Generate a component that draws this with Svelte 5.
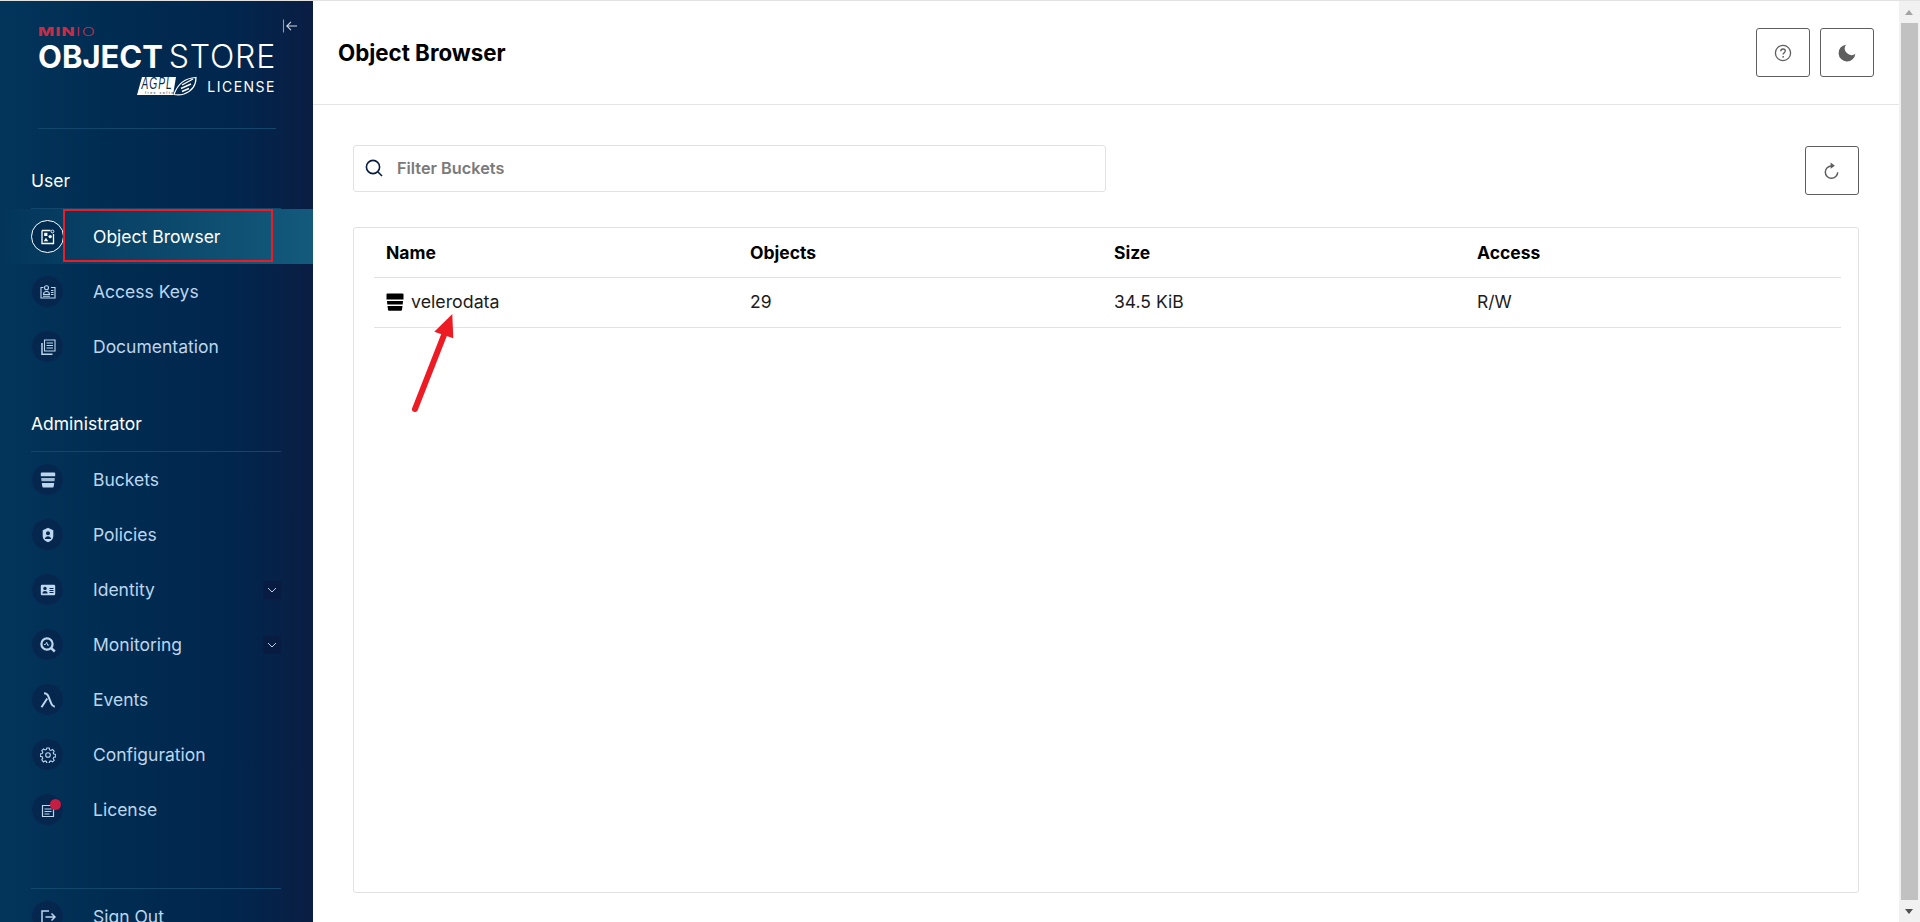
<script>
    const userItems = [
        { label: 'Object Browser', icon: 'browser', active: true },
        { label: 'Access Keys', icon: 'keys' },
        { label: 'Documentation', icon: 'docs' }
    ];
    const adminItems = [
        { label: 'Buckets', icon: 'bucket' },
        { label: 'Policies', icon: 'policy' },
        { label: 'Identity', icon: 'identity', more: true },
        { label: 'Monitoring', icon: 'monitor', more: true },
        { label: 'Events', icon: 'lambda' },
        { label: 'Configuration', icon: 'gear' },
        { label: 'License', icon: 'license', badge: true }
    ];
    const columns = ['Name', 'Objects', 'Size', 'Access'];
</script>

{#snippet navIcon(name)}
    <svg viewBox="0 0 16 16" width="16" height="16" fill="none" stroke="currentColor" stroke-width="1.1">
        {#if name === 'browser'}
            <path d="M2 1.500h8.500M13.500 5v9.500H2v-13" stroke-width="1.300" />
            <circle cx="12.500" cy="2.500" r="1.400" stroke-width="0.900" />
            <rect x="4.200" y="3.800" width="3.200" height="3.200" fill="currentColor" stroke="none" />
            <circle cx="10.200" cy="7.600" r="1.700" fill="currentColor" stroke="none" />
            <path d="M6 8.800l2.200 3.500H3.800z" fill="currentColor" stroke="none" />
        {:else if name === 'keys'}
            <path d="M3.500 3.500H1v10.500h14V3.500h-4" />
            <circle cx="6.500" cy="3.800" r="2" />
            <path d="M3.500 10.500c0-2 1.300-3 3-3s3 1 3 3z" />
            <path d="M11 6.500h2.500M11 8.500h2.500M11 10.500h2.500M3 12.300h7" />
        {:else if name === 'docs'}
            <path d="M4.500 1h10.500v11h-10.500z" />
            <path d="M6.500 4h6.500M6.500 6.500h6.500M6.500 9h6.500" />
            <path d="M2 4v11.200h10.500" stroke-width="1.500" />
        {:else if name === 'bucket'}
            <path d="M.8 1.500q0-1 1-1h12.400q1 0 1 1v2.700H.8z" fill="currentColor" stroke="none" />
            <path d="M1.200 6h13.600l-.3 3.300H1.500z" fill="currentColor" stroke="none" opacity=".85" />
            <path d="M1.800 11h12.400l-.5 3.500q-.1 1-1 1H3.300q-.9 0-1-1z" fill="currentColor" stroke="none" />
        {:else if name === 'policy'}
            <path d="M8 .8l5.300 2.400v6c0 3-2.300 5-5.300 6-3-1-5.300-3-5.300-6v-6z" fill="currentColor" stroke="none" />
            <circle cx="8" cy="6.300" r="2" fill="#06264e" stroke="none" />
            <path d="M4.800 12c.5-2 1.700-2.800 3.200-2.800s2.700.8 3.200 2.800z" fill="#06264e" stroke="none" />
        {:else if name === 'identity'}
            <rect x=".8" y="2.800" width="14.400" height="10.400" rx="1.200" fill="currentColor" stroke="none" />
            <circle cx="5" cy="6.400" r="1.700" fill="#06264e" stroke="none" />
            <path d="M2.400 11.500c.2-1.800 1.300-2.500 2.600-2.500s2.400.7 2.600 2.500z" fill="#06264e" stroke="none" />
            <path d="M9.500 6.500h4M9.500 8.500h4M9.500 10.500h4" stroke="#06264e" />
        {:else if name === 'monitor'}
            <circle cx="7" cy="7" r="5.600" stroke-width="2.200" />
            <path d="M4 7.500h1.500l1.200-2.200 1.300 3.400 1-1.200" stroke-width="1" />
            <path d="M11 11l3.800 3.500" stroke-width="2.400" />
        {:else if name === 'lambda'}
            <path d="M1.500 15.200L7.200 6.500M4 1.200c2.500 0 3.500.9 4.300 3l3 7.500c.6 1.500 1.500 2.700 3.500 3" stroke-width="2" />
        {:else if name === 'gear'}
            <circle cx="8" cy="8" r="2.300" />
            <path d="M6.800 1h2.400l.4 1.900 1.300.6 1.700-1 1.600 1.700-1 1.600.6 1.300 1.900.4v2.400l-1.900.4-.6 1.300 1 1.700-1.700 1.600-1.600-1-1.300.6-.4 1.900H6.800l-.4-1.900-1.300-.6-1.700 1L1.800 12.700l1-1.600-.6-1.300-1.900-.4V7l1.900-.4.6-1.300-1-1.700 1.700-1.600 1.600 1 1.300-.6z" />
        {:else if name === 'license'}
            <path d="M2.500 3.500h11v11h-11z" stroke-width="1.200" />
            <path d="M4.500 7h7M4.500 9.500h7M4.500 12h5" stroke-width="1.200" />
        {:else if name === 'signout'}
            <path d="M9 2H2v12h7" stroke-width="1.500" />
            <path d="M5.500 8h9.500M11.500 4.500L15 8l-3.500 3.500" stroke-width="1.500" />
        {/if}
    </svg>
{/snippet}

{#snippet navRow(item)}
    <a class="nav-row" class:active={item.active} href="#top">
        <span class="nav-icon">
            {@render navIcon(item.icon)}
            {#if item.badge}<span class="dot"></span>{/if}
        </span>
        <span class="nav-label">{item.label}</span>
        {#if item.more}
            <span class="chevron">
                <svg viewBox="0 0 10 10" width="10" height="10" fill="none" stroke="currentColor" stroke-width="1">
                    <path d="M1 3L5 7l4-4" />
                </svg>
            </span>
        {/if}
    </a>
{/snippet}

<div class="app">
    <aside class="sidebar">
        <button class="collapse" aria-label="Collapse menu">
            <svg viewBox="0 0 16 16" width="16" height="16" fill="none" stroke-width="1.100">
                <path d="M1.500 1.500v13" stroke="#8d9db3" />
                <path d="M15 8H5M9 3.800L4.800 8 9 12.200" stroke="#cfd8e3" />
            </svg>
        </button>

        <div class="logo">
            <div class="minio"><b>MIN</b>IO</div>
            <div class="product"><b>OBJECT</b><span>STORE</span></div>
            <div class="license-line">
                <svg class="agpl" viewBox="0 0 62 20" width="62" height="20">
                    <path d="M6 1h34l-3 18H1z" fill="#fff" />
                    <text x="5.500" y="13" class="agpl-text" textLength="31" lengthAdjust="spacingAndGlyphs">AGPL</text>
                    <text x="9" y="17.800" class="agpl-small">free software</text>
                    <path d="M38 18.500C42 7 50 2 60 1.500c0 5-2 13-12 16.500-4 1.300-7 1-10 .5z" fill="none" stroke="#fff" stroke-width="1.200" />
                    <path d="M46 9l11-6M45 12.500l10-4.500M46 15.500l7-3" stroke="#fff" stroke-width="1.400" fill="none" />
                </svg>
                <span>LICENSE</span>
            </div>
        </div>

        <div class="section-title first">User</div>
        {#each userItems as item}
            {@render navRow(item)}
        {/each}

        <div class="section-title">Administrator</div>
        {#each adminItems as item}
            {@render navRow(item)}
        {/each}

        <div class="sign-out">
            {@render navRow({ label: 'Sign Out', icon: 'signout' })}
        </div>
    </aside>

    <main class="content">
        <header class="topbar">
            <h1>Object Browser</h1>
            <div class="top-actions">
                <button class="icon-button" aria-label="Help">
                    <svg viewBox="0 0 18 18" width="18" height="18" fill="none" stroke="currentColor" stroke-width="1.300">
                        <circle cx="9" cy="9" r="7.600" />
                        <path d="M6.800 7.200c0-1.400 1-2.200 2.300-2.200s2.200.8 2.200 2c0 1.600-2.200 1.700-2.200 3.400" />
                        <circle cx="9.100" cy="12.800" r=".9" fill="currentColor" stroke="none" />
                    </svg>
                </button>
                <button class="icon-button" aria-label="Dark mode">
                    <svg viewBox="0 0 18 18" width="18" height="18" fill="currentColor">
                        <path d="M8 .65A8.400 8.400 0 1 0 17.350 9.700 6.600 6.600 0 0 1 8 .65z" />
                    </svg>
                </button>
            </div>
        </header>

        <div class="body">
            <div class="toolbar">
                <label class="search">
                    <svg viewBox="0 0 18 18" width="18" height="18" fill="none" stroke="#081c42" stroke-width="1.600">
                        <circle cx="8" cy="8" r="6.600" />
                        <path d="M13 13l4 4" />
                    </svg>
                    <input type="text" placeholder="Filter Buckets" />
                </label>
                <button class="icon-button refresh" aria-label="Refresh">
                    <svg viewBox="0 0 18 18" width="18" height="18" fill="none" stroke="currentColor" stroke-width="1.500">
                        <path d="M8.500 3.900a6.200 6.200 0 1 0 6.200 6.300" />
                        <path d="M7.600 .6l4.300 3.200-4.300 2.900z" fill="currentColor" stroke="none" />
                    </svg>
                </button>
            </div>

            <section class="table-card">
                <div class="table-row head">
                    {#each columns as col}
                        <div>{col}</div>
                    {/each}
                </div>
                <div class="table-row body-row">
                    <div class="name-cell">
                        <svg viewBox="0 0 18 18" width="18" height="18" fill="#000">
                            <path d="M.5 1.500q0-1 1-1h15q1 0 1 1v5H.5z" />
                            <path d="M1 8h16l-.3 3.500H1.300z" />
                            <path d="M1.500 13h15l-.5 3.800q-.1 1-1 1H3q-.9 0-1-1z" />
                        </svg>
                        <span class="bucket-name">velerodata</span>
                    </div>
                    <div>29</div>
                    <div>34.5 KiB</div>
                    <div>R/W</div>
                </div>
            </section>
        </div>
    </main>

    <div class="scrollbar">
        <div class="arrow up"></div>
        <div class="thumb"></div>
        <div class="arrow down"></div>
    </div>

    <!-- annotations drawn over the screenshot -->
    <div class="red-box"></div>
    <svg class="red-arrow" viewBox="0 0 60 110" width="60" height="110">
        <path d="M6 103L37 24" stroke="#ed1c24" stroke-width="6" stroke-linecap="round" fill="none" />
        <path d="M43.300 8L44.300 32.300 25.300 25.700z" fill="#ed1c24" />
    </svg>
</div>

<style>
    :global(body) {
        margin: 0;
        overflow: hidden;
        background: #fff;
    }

    .app {
        position: relative;
        display: flex;
        height: 921px;
        border-top: 1px solid #e2e2e2;
        overflow: hidden;
        font-family: 'Inter', sans-serif;
        font-size: 17.500px;
        color: #000;
    }

    .sidebar {
        position: relative;
        flex: 0 0 313px;
        height: 100%;
        overflow: hidden;
        background: linear-gradient(90deg, #03355a 0%, #012c52 35%, #01264e 75%, #0b1d42 100%);
        color: #fff;
    }

    .collapse {
        position: absolute;
        top: 17px;
        right: 15px;
        padding: 0;
        border: none;
        background: none;
        display: flex;
    }

    .logo {
        height: 128px;
        margin: 0 37px 0 38px;
        padding-top: 26px;
        box-sizing: border-box;
        border-bottom: 1px solid #12466b;
        color: #fff;
    }

    .minio {
        font-size: 11.500px;
        line-height: 10px;
        letter-spacing: 0.800px;
        font-weight: 300;
        color: #c72c48;
        transform: scaleX(1.500);
        transform-origin: left;
    }

    .minio b {
        font-weight: 800;
    }

    .product {
        display: flex;
        justify-content: space-between;
        margin-top: 4px;
        font-size: 31px;
        line-height: 32px;
        white-space: nowrap;
    }

    .product b {
        font-weight: 700;
    }

    .product span {
        font-weight: 300;
        font-size: 32px;
        letter-spacing: 0.800px;
    }

    .license-line {
        display: flex;
        justify-content: flex-end;
        align-items: center;
        gap: 9px;
        margin-top: 3px;
        font-size: 14px;
        letter-spacing: 1.500px;
    }

    .agpl-text {
        font-family: 'Liberation Sans', sans-serif;
        font-size: 16px;
        font-style: italic;
        fill: #0a2a50;
    }

    .agpl-small {
        font-family: 'Liberation Sans', sans-serif;
        font-size: 3.500px;
        fill: #0a2a50;
    }

    .section-title {
        height: 54px;
        margin: 24px 32px 0 31px;
        box-sizing: border-box;
        padding-bottom: 3px;
        border-bottom: 1px solid #12466b;
        display: flex;
        align-items: center;
        color: #fff;
    }

    .section-title.first {
        margin-top: 26px;
    }

    .nav-row {
        display: flex;
        align-items: center;
        height: 55px;
        padding: 0 32px 0 31px;
        color: #bcd6ee;
        text-decoration: none;
    }

    .nav-row.active {
        color: #fff;
        background: linear-gradient(90deg, #03355a 0%, #135a7c 100%);
    }

    .nav-icon {
        position: relative;
        flex: 0 0 33px;
        height: 33px;
        margin-right: 29px;
        box-sizing: border-box;
        border: 1px solid #06305a;
        border-radius: 50%;
        background: #05264d;
        display: flex;
        align-items: center;
        justify-content: center;
    }

    .active .nav-icon {
        border-color: #fff;
        background: #012c52;
    }

    .dot {
        position: absolute;
        top: 5px;
        left: 18px;
        width: 11px;
        height: 11px;
        border-radius: 50%;
        background: #c41e44;
    }

    .nav-label {
        flex: 1;
    }

    .chevron {
        width: 18px;
        height: 18px;
        border-radius: 2px;
        background: #081c42;
        color: #b8cfe5;
        display: flex;
        align-items: center;
        justify-content: center;
    }

    .sign-out {
        margin: 51px 0 0;
    }

    .sign-out::before {
        content: '';
        display: block;
        height: 1px;
        margin: 0 32px 0 31px;
        background: #12466b;
    }

    .content {
        flex: 1;
        min-width: 0;
        display: flex;
        flex-direction: column;
    }

    .topbar {
        height: 104px;
        flex: none;
        box-sizing: border-box;
        padding: 0 25px;
        border-bottom: 1px solid #e5e5e5;
        display: flex;
        align-items: center;
        justify-content: space-between;
    }

    h1 {
        margin: 0;
        font-size: 22.300px;
        font-weight: 700;
    }

    .top-actions {
        display: flex;
        gap: 10px;
    }

    .icon-button {
        width: 54px;
        height: 49px;
        padding: 0;
        border: 1px solid #5e5e5e;
        border-radius: 3px;
        background: #fff;
        color: #5e5e5e;
        display: flex;
        align-items: center;
        justify-content: center;
    }

    .refresh {
        margin-top: 1px;
    }

    .body {
        flex: 1;
        min-height: 0;
        padding: 40px 40px 29px 40px;
        display: flex;
        flex-direction: column;
        gap: 32px;
    }

    .toolbar {
        display: flex;
        justify-content: space-between;
        align-items: flex-start;
    }

    .search {
        width: 753px;
        height: 47px;
        box-sizing: border-box;
        border: 1px solid #e2e2e2;
        border-radius: 3px;
        padding: 0 11px 1px;
        display: flex;
        align-items: center;
        gap: 12px;
    }

    input {
        flex: 1;
        border: none;
        outline: none;
        font-family: inherit;
        font-size: 16.300px;
        font-weight: 600;
        color: #000;
    }

    input::placeholder {
        color: #7a7a7a;
        opacity: 1;
    }

    .table-card {
        flex: 1;
        min-height: 0;
        box-sizing: border-box;
        border: 1px solid #e2e2e2;
        border-radius: 3px;
        padding: 0 17px 0 20px;
    }

    .table-row {
        display: grid;
        grid-template-columns: 364px 364px 363px 1fr;
        align-items: center;
        height: 50px;
        box-sizing: border-box;
        border-bottom: 1px solid #e2e2e2;
        color: #1c1c1c;
    }

    .table-row > div {
        padding-left: 12px;
    }

    .table-row.head {
        color: #000;
        font-weight: 700;
    }

    .table-row.body-row {
        padding-bottom: 2px;
    }

    .name-cell {
        display: flex;
        align-items: center;
        gap: 7px;
    }

    .bucket-name {
        font-size: 17.800px;
    }

    .scrollbar {
        flex: 0 0 21px;
        height: 100%;
        background: #f1f1f1;
        display: flex;
        flex-direction: column;
        align-items: center;
    }

    .thumb {
        width: 17px;
        flex: 1;
        background: #c1c1c1;
    }

    .arrow {
        flex: 0 0 22px;
        width: 100%;
        position: relative;
    }

    .arrow::after {
        content: '';
        position: absolute;
        left: 6px;
        border-left: 4.500px solid transparent;
        border-right: 4.500px solid transparent;
    }

    .arrow.up::after {
        top: 9px;
        border-bottom: 5px solid #a3a3a3;
    }

    .arrow.down::after {
        top: 9px;
        border-top: 5px solid #505050;
    }

    .red-box {
        position: absolute;
        left: 63px;
        top: 208px;
        width: 210px;
        height: 53px;
        box-sizing: border-box;
        border: 2px solid #ed1c24;
        pointer-events: none;
    }

    .red-arrow {
        position: absolute;
        left: 409px;
        top: 305px;
        pointer-events: none;
    }
</style>
